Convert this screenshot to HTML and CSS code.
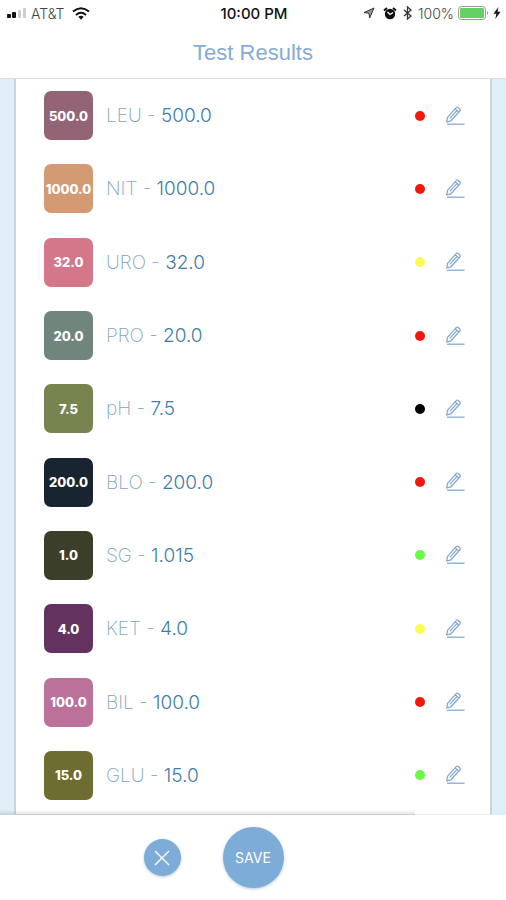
FILE: index.html
```html
<!DOCTYPE html>
<html lang="en">
<head>
  <meta charset="UTF-8">
  <meta name="viewport" content="width=device-width, initial-scale=1.0">
  <title>Test Results</title>
  <link rel="stylesheet" href="styles.css">
</head>
<body>
  <!-- Shared pencil icon -->
  <svg class="sprite" aria-hidden="true">
    <symbol id="pencil" viewBox="0 0 20 20">
      <path d="M2.5 11.4 L11.2 1.6 Q12.2 0.7 13.3 1.6 L14.8 2.9 Q15.8 3.9 14.8 5 L5.9 14.8 L1.8 15.9 Z M10.3 2.9 L13.6 6 M11.8 4.6 L4.8 12.4"/>
      <path d="M2 18.2 H19.5"/>
    </symbol>
  </svg>

  <div class="screen">
    <header class="header">
      <div class="status-bar">
        <div class="status-left">
          <svg class="signal" width="20" height="12" viewBox="0 0 20 12" aria-hidden="true">
            <rect x="0" y="7" width="4" height="4" rx="1" fill="#111"/>
            <rect x="5" y="5" width="4" height="6" rx="1" fill="#111"/>
            <rect x="11" y="3" width="3" height="8" rx="1" fill="#ccc"/>
            <rect x="16" y="1" width="3" height="10" rx="1" fill="#ccc"/>
          </svg>
          <span>AT&amp;T</span>
          <svg class="wifi" width="18" height="13" viewBox="0 0 18 13" fill="none" stroke="#111" stroke-width="2" aria-hidden="true">
            <path d="M1 4.6 Q9 -2.2 17 4.6"/>
            <path d="M4 8 Q9 3.6 14 8"/>
            <path d="M6.3 9.8 Q9 7.8 11.7 9.8 L9 12.8 Z" fill="#111" stroke="none"/>
          </svg>
        </div>
        <time class="clock">10:00 PM</time>
        <div class="status-right">
          <svg class="location" width="12" height="12" viewBox="0 0 12 12" aria-hidden="true">
            <path d="M11 1 L1 5.6 L6 6.2 L6.6 11 Z" fill="#999" stroke="#333" stroke-width="1"/>
          </svg>
          <svg width="14" height="13" viewBox="0 0 14 13" aria-hidden="true">
            <circle cx="7" cy="7" r="5.2" fill="#111"/>
            <path d="M1 3.5 L4 1 M13 3.5 L10 1" stroke="#111" stroke-width="2"/>
            <path d="M4.5 5 L7 7.5 L10 5.5" fill="none" stroke="#fff" stroke-width="1.3"/>
          </svg>
          <svg width="9" height="14" viewBox="0 0 9 14" fill="none" stroke="#333" stroke-width="1.3" aria-hidden="true">
            <path d="M1 4 L8 10 L4.5 13 V1 L8 4 L1 10"/>
          </svg>
          <span>100%</span>
          <svg class="battery" width="31" height="14" viewBox="0 0 31 14" aria-hidden="true">
            <rect x="0.5" y="0.5" width="27" height="13" rx="3" fill="#fff" stroke="#999"/>
            <rect x="2" y="2" width="24" height="10" rx="1" fill="#65d064"/>
            <path d="M29 4.5 Q31 7 29 9.5 Z" fill="#999"/>
          </svg>
          <svg width="8" height="12" viewBox="0 0 8 12" fill="#111" aria-hidden="true">
            <path d="M5.5 0 L0.5 6.7 H3.4 L2.3 12 L7.5 4.8 H4.5 Z"/>
          </svg>
        </div>
      </div>
      <h1 class="title">Test Results</h1>
    </header>

    <main class="content">
      <ul class="results">
        <li class="result">
          <span class="swatch leu">500.0</span>
          <p class="reading">LEU - <strong>500.0</strong></p>
          <span class="dot high"></span>
          <button class="edit" aria-label="Edit LEU"><svg><use href="#pencil"/></svg></button>
        </li>
        <li class="result">
          <span class="swatch nit">1000.0</span>
          <p class="reading">NIT - <strong>1000.0</strong></p>
          <span class="dot high"></span>
          <button class="edit" aria-label="Edit NIT"><svg><use href="#pencil"/></svg></button>
        </li>
        <li class="result">
          <span class="swatch uro">32.0</span>
          <p class="reading">URO - <strong>32.0</strong></p>
          <span class="dot medium"></span>
          <button class="edit" aria-label="Edit URO"><svg><use href="#pencil"/></svg></button>
        </li>
        <li class="result">
          <span class="swatch pro">20.0</span>
          <p class="reading">PRO - <strong>20.0</strong></p>
          <span class="dot high"></span>
          <button class="edit" aria-label="Edit PRO"><svg><use href="#pencil"/></svg></button>
        </li>
        <li class="result">
          <span class="swatch ph">7.5</span>
          <p class="reading">pH - <strong>7.5</strong></p>
          <span class="dot"></span>
          <button class="edit" aria-label="Edit pH"><svg><use href="#pencil"/></svg></button>
        </li>
        <li class="result">
          <span class="swatch blo">200.0</span>
          <p class="reading">BLO - <strong>200.0</strong></p>
          <span class="dot high"></span>
          <button class="edit" aria-label="Edit BLO"><svg><use href="#pencil"/></svg></button>
        </li>
        <li class="result">
          <span class="swatch sg">1.0</span>
          <p class="reading">SG - <strong>1.015</strong></p>
          <span class="dot normal"></span>
          <button class="edit" aria-label="Edit SG"><svg><use href="#pencil"/></svg></button>
        </li>
        <li class="result">
          <span class="swatch ket">4.0</span>
          <p class="reading">KET - <strong>4.0</strong></p>
          <span class="dot medium"></span>
          <button class="edit" aria-label="Edit KET"><svg><use href="#pencil"/></svg></button>
        </li>
        <li class="result">
          <span class="swatch bil">100.0</span>
          <p class="reading">BIL - <strong>100.0</strong></p>
          <span class="dot high"></span>
          <button class="edit" aria-label="Edit BIL"><svg><use href="#pencil"/></svg></button>
        </li>
        <li class="result">
          <span class="swatch glu">15.0</span>
          <p class="reading">GLU - <strong>15.0</strong></p>
          <span class="dot normal"></span>
          <button class="edit" aria-label="Edit GLU"><svg><use href="#pencil"/></svg></button>
        </li>
      </ul>
    </main>

    <footer class="actions">
      <button class="round-btn cancel" aria-label="Cancel">
        <svg width="16" height="16" viewBox="0 0 16 16" fill="none" stroke="#fff" stroke-width="1.4" aria-hidden="true">
          <path d="M1 1 L15 15 M15 1 L1 15"/>
        </svg>
      </button>
      <button class="round-btn save">SAVE</button>
    </footer>
  </div>
</body>
</html>
```
FILE: styles.css
```css
* {
  box-sizing: border-box;
}

body {
  margin: 0;
  font-family: Inter, "Liberation Sans", sans-serif;
  background-color: #fff;
}

button {
  font-family: inherit;
  border: none;
  padding: 0;
  cursor: pointer;
}

.sprite {
  display: none;
}

.screen {
  display: flex;
  flex-direction: column;
  min-height: 100vh;
}

/* Header */
.header {
  border-bottom: 1px solid #d9e0e4;
}

.status-bar {
  display: grid;
  grid-template-columns: 1fr auto 1fr;
  align-items: center;
  height: 26px;
  padding: 0 5px 0 7px;
  font-size: 14px;
  font-weight: 300;
  color: #444;
}

.status-left,
.status-right {
  display: flex;
  align-items: center;
  gap: 4px;
}

.wifi {
  margin-left: 3px;
}

.status-right {
  justify-content: flex-end;
}

.status-right svg {
  margin-right: 2px;
}

.status-right .location {
  margin-right: 4px;
}

.status-right .battery {
  margin-right: 0;
}

.status-right svg:last-child {
  margin-right: 0;
}

.clock {
  font-size: 15px;
  font-weight: 500;
  color: #111;
}

.title {
  margin: 0;
  height: 52px;
  line-height: 54px;
  text-align: center;
  font-family: "Liberation Sans", Arial, sans-serif;
  font-size: 22px;
  font-weight: 400;
  color: #86acd3;
}

/* Results */
.content {
  flex: 1;
  display: flex;
  padding: 0 14px;
  background-color: #e0eef8;
}

.results {
  flex: 1;
  display: grid;
  grid-auto-rows: 1fr;
  margin: 0;
  padding: 0 25px 2px 28px;
  list-style: none;
  background-color: #fff;
  border: solid #c6d5e0;
  border-width: 0 2px;
}

.result {
  display: flex;
  align-items: center;
}

.swatch {
  display: flex;
  align-items: center;
  justify-content: center;
  width: 49px;
  height: 49px;
  margin-right: 13px;
  border-radius: 7px;
  font-size: 13px;
  font-weight: 800;
  color: #fff;
}

.leu { background-color: #926476; }
.nit { background-color: #d49a73; }
.uro { background-color: #d5778a; }
.pro { background-color: #70857b; }
.ph { background-color: #788450; }
.blo { background-color: #182530; }
.sg { background-color: #3b3e28; }
.ket { background-color: #64325f; }
.bil { background-color: #bb7199; }
.glu { background-color: #6d6d31; }

.reading {
  flex: 1;
  margin: 0;
  font-size: 19px;
  font-weight: 200;
  color: #7fa4be;
}

.reading strong {
  font-weight: 300;
  color: #427da8;
}

.dot {
  width: 10px;
  height: 10px;
  margin-right: 20px;
  border-radius: 50%;
  background-color: #000;
}

.high { background-color: #f3170c; }
.medium { background-color: #fcfc50; }
.normal { background-color: #6afa46; }

.edit {
  width: 20px;
  height: 20px;
  background: none;
}

.edit svg {
  display: block;
  width: 20px;
  height: 20px;
  fill: none;
  stroke: #86abd0;
  stroke-width: 1.3;
}

/* Bottom buttons */
.actions {
  position: relative;
  display: grid;
  grid-template-columns: 1fr auto 1fr;
  align-items: center;
  gap: 42px;
  height: 86px;
  border-top: 1px solid #e6ebee;
  background-color: #fff;
}

/* Soft shadow over the end of the list */
.actions::before {
  content: "";
  position: absolute;
  left: 0;
  bottom: 100%;
  width: 82%;
  height: 5px;
  background: linear-gradient(transparent, rgba(100, 130, 150, 0.25));
}

.round-btn {
  display: flex;
  align-items: center;
  justify-content: center;
  border-radius: 50%;
  background-color: #7eacd8;
  color: #fff;
  box-shadow: 0 1px 3px rgba(80, 120, 160, 0.4);
}

.cancel {
  justify-self: end;
  width: 37px;
  height: 37px;
}

.save {
  width: 61px;
  height: 61px;
  font-size: 14px;
}
```
